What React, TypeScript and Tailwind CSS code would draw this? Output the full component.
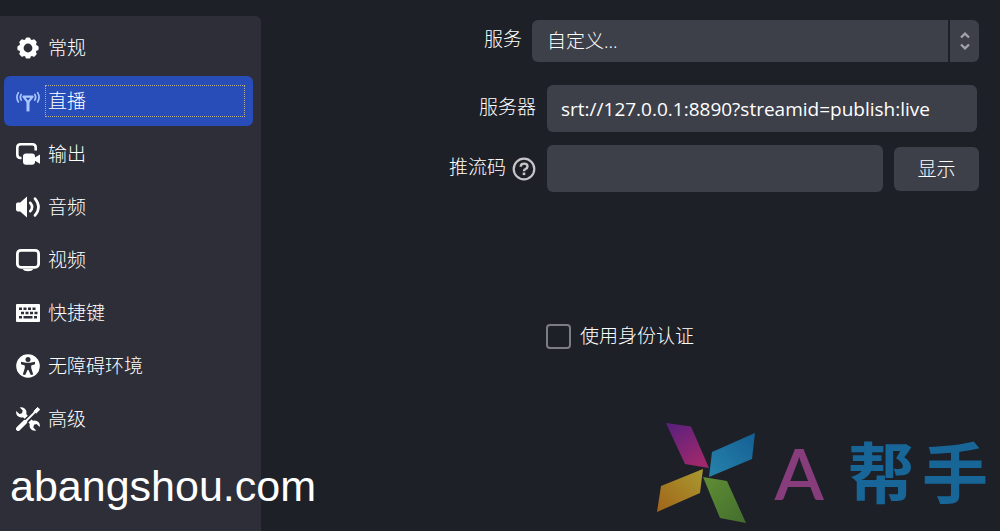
import { useState } from "react";
import type { ReactNode } from "react";
import clsx from "clsx";

interface Section {
  id: string;
  label: string;
  icon: ReactNode;
}

const teeth = [0, 45, 90, 135, 180, 225, 270, 315];

function GearIcon() {
  return (
    <svg viewBox="0 0 24 24" className="size-6" aria-hidden="true">
      <circle cx="12" cy="12" r="6.7" fill="none" stroke="currentColor" strokeWidth="4.6" />
      {teeth.map((angle) => (
        <rect
          key={angle}
          x="9.4"
          y="1.4"
          width="5.2"
          height="4.5"
          rx="1.6"
          fill="currentColor"
          transform={`rotate(${angle} 12 12)`}
        />
      ))}
    </svg>
  );
}

function AntennaIcon() {
  return (
    <svg viewBox="0 0 24 24" className="size-6 text-[#a9c6ff]" fill="none" stroke="currentColor" aria-hidden="true">
      <path d="M7.4 7.6h9.2L12 13.4z" strokeWidth="2.2" strokeLinejoin="round" />
      <path d="M12 12v10.4" strokeWidth="3" />
      <path d="M5.2 5.4q-1.8 2.8 0 5.8M18.8 5.4q1.8 2.8 0 5.8" strokeWidth="1.6" strokeLinecap="round" />
      <path d="M2.4 3.6q-3 4.6 0 9.4M21.6 3.6q3 4.6 0 9.4" strokeWidth="1.6" strokeLinecap="round" />
    </svg>
  );
}

function OutputIcon() {
  return (
    <svg viewBox="0 0 24 24" className="size-6" aria-hidden="true">
      <path
        d="M5.5 16H4.6Q1.3 16 1.3 12.5V5.5Q1.3 2.2 4.6 2.2H16.4Q19.7 2.2 19.7 5.5V8.5"
        fill="none"
        stroke="currentColor"
        strokeWidth="2.6"
      />
      <rect x="7" y="11.5" width="12" height="11.3" rx="3" fill="currentColor" />
      <path d="M18 16l6-3.5v9.2l-6-3.5z" fill="currentColor" />
    </svg>
  );
}

function SpeakerIcon() {
  return (
    <svg viewBox="0 0 24 24" className="size-6" aria-hidden="true">
      <path d="M0 9.5Q0 7.8 1.6 7.6H4.2L11 1.6V22.4L4.2 16.4H1.6Q0 16.2 0 14.5z" fill="currentColor" />
      <path
        d="M14.3 7.8q3.6 4.2 0 8.4M19 3.6q7 8.4 0 16.8"
        fill="none"
        stroke="currentColor"
        strokeWidth="2.6"
        strokeLinecap="round"
      />
    </svg>
  );
}

function MonitorIcon() {
  return (
    <svg viewBox="0 0 24 24" className="size-6" aria-hidden="true">
      <rect x="1.4" y="2.3" width="21.2" height="17" rx="3.4" fill="none" stroke="currentColor" strokeWidth="2.8" />
      <path d="M6.5 21h11q-1.5 2.2-5.5 2.2T6.500 21z" fill="currentColor" />
    </svg>
  );
}

function KeyboardIcon() {
  return (
    <svg viewBox="0 0 24 24" className="size-6" aria-hidden="true">
      <rect y="3" width="24" height="18" rx="1" fill="currentColor" />
      <path
        d="M3 7.8h3m1.500 0h3m1.500 0h3m1.500 0h3M5 12h3m1.500 0h3m1.500 0h3m1.500 0h3M3 16.300h3m1.500 0h9m1.500 0h3"
        stroke="#2d2e38"
        strokeWidth="2.6"
      />
    </svg>
  );
}

function AccessIcon() {
  return (
    <svg viewBox="0 0 24 24" className="size-6" aria-hidden="true">
      <circle cx="12" cy="12" r="11.8" fill="currentColor" />
      <circle cx="12" cy="5.4" r="2.5" fill="#2d2e38" />
      <path
        d="M5 7.800L10 8.800H14L19 7.800V10.200L15.200 11.400V14L17.200 20.400L14.800 21L12.500 16H11.500L9.200 21L6.800 20.400L8.800 14V11.400L5 10.200z"
        fill="#2d2e38"
      />
    </svg>
  );
}

function ToolsIcon() {
  return (
    <svg viewBox="0 0 24 24" className="size-6" aria-hidden="true">
      <path d="M2.2 21.8L9 15" stroke="currentColor" strokeWidth="4.400" strokeLinecap="round" />
      <path d="M8 16L20 4" stroke="currentColor" strokeWidth="1.800" />
      <path d="M18 4.200L21.600 0.400L23.800 2.600L20 6.200z" fill="currentColor" stroke="currentColor" strokeLinejoin="round" />
      <path
        d="M3.800 0.400Q8 -0.400 10 3.300Q10.800 5.200 10.200 7L11.800 8.700L8.700 11.800L7 10.200Q3.800 11.200 1.300 8.700Q-0.300 6.800 0.300 4L3.400 6.900L6 6.200L6.700 3.400z"
        fill="currentColor"
      />
      <path
        d="M20.200 23.600Q16 24.400 14 20.700Q13.200 18.800 13.800 17L12.400 15.500L15.500 12.400L17 13.800Q20.200 12.800 22.700 15.300Q24.300 17.200 23.700 20L20.600 17.100L18 17.800L17.300 20.600z"
        fill="currentColor"
      />
    </svg>
  );
}

function HelpIcon() {
  return (
    <svg viewBox="0 0 24 24" className="size-6 text-[#c6c6ca]" fill="none" stroke="currentColor" aria-hidden="true">
      <circle cx="12" cy="12" r="10.3" strokeWidth="2.2" />
      <path d="M8.700 9.800q0-3.200 3.400-3.200t3.400 2.900q0 1.600-2 2.500-1.500.7-1.500 2.200" strokeWidth="2.4" />
      <path d="M12 15.600v2.500" strokeWidth="2.6" />
    </svg>
  );
}

const sections: Section[] = [
  { id: "general", label: "常规", icon: <GearIcon /> },
  { id: "stream", label: "直播", icon: <AntennaIcon /> },
  { id: "output", label: "输出", icon: <OutputIcon /> },
  { id: "audio", label: "音频", icon: <SpeakerIcon /> },
  { id: "video", label: "视频", icon: <MonitorIcon /> },
  { id: "hotkeys", label: "快捷键", icon: <KeyboardIcon /> },
  { id: "accessibility", label: "无障碍环境", icon: <AccessIcon /> },
  { id: "advanced", label: "高级", icon: <ToolsIcon /> },
];

function Sidebar() {
  const [active, setActive] = useState("stream");

  return (
    <nav className="mt-4 flex w-[261px] shrink-0 flex-col gap-[3px] rounded-tr-md bg-[#2d2e38] pt-[7px] pr-2 pl-1">
      {sections.map((section) => (
        <button
          key={section.id}
          type="button"
          onClick={() => setActive(section.id)}
          className={clsx(
            "flex h-[50px] items-center gap-[5px] rounded-md pr-2 pl-3 text-left",
            section.id === active && "bg-[#284cb8]",
          )}
        >
          {section.icon}
          <span
            className={clsx(
              "flex h-8 flex-1 items-center border border-dotted pl-[2px]",
              section.id === active ? "border-[#b5b08c]" : "border-transparent",
            )}
          >
            {section.label}
          </span>
        </button>
      ))}
    </nav>
  );
}

function StreamForm() {
  const [server, setServer] = useState("srt://127.0.0.1:8890?streamid=publish:live");
  const [streamKey, setStreamKey] = useState("");
  const [showKey, setShowKey] = useState(false);

  return (
    <form className="flex-1 pt-5 pr-[21px]">
      <div className="flex items-center gap-[10px]">
        <label htmlFor="service" className="w-[261px] pb-1 text-right">
          服务
        </label>
        <div className="relative flex-1">
          <select
            id="service"
            className="block h-[42px] w-full appearance-none rounded-md bg-[#3d3f49] px-[15px]"
          >
            <option>自定义...</option>
          </select>
          <div className="pointer-events-none absolute inset-y-0 right-0 flex w-[31px] items-center justify-center border-l-2 border-[#1e2028]">
            <svg viewBox="0 0 10 18" className="h-[18px] w-[10px]" fill="none" stroke="#a3a4aa" strokeWidth="2.2">
              <path d="M1 5.500L5 1.600L9 5.500M1 12.500L5 16.400L9 12.500" />
            </svg>
          </div>
        </div>
      </div>

      <div className="mt-[23px] flex items-center gap-[11px] pr-[2px]">
        <label htmlFor="server" className="w-[275px] pb-1 text-right">
          服务器
        </label>
        <input
          id="server"
          type="text"
          value={server}
          onChange={(e) => setServer(e.target.value)}
          className="h-[47px] min-w-0 flex-1 rounded-md bg-[#3d3f49] px-[14px] font-normal"
        />
      </div>

      <div className="mt-[13px] flex items-center gap-[11px]">
        <label htmlFor="stream-key" className="flex w-[275px] items-center justify-end gap-[6px]">
          <span className="pb-1">推流码</span>
          <HelpIcon />
        </label>
        <input
          id="stream-key"
          type={showKey ? "text" : "password"}
          value={streamKey}
          onChange={(e) => setStreamKey(e.target.value)}
          className="h-[47px] min-w-0 flex-1 rounded-md bg-[#3d3f49] px-[14px] font-normal"
        />
        <button
          type="button"
          onClick={() => setShowKey(!showKey)}
          className="h-11 w-[85px] rounded-md bg-[#3d3f49]"
        >
          显示
        </button>
      </div>

      <label className="mt-[130px] ml-[285px] flex w-fit items-center gap-[9px]">
        <input
          type="checkbox"
          className="size-[25px] appearance-none rounded-[4px] border-2 border-[#7c7d84] checked:bg-[#284cb8]"
        />
        使用身份认证
      </label>
    </form>
  );
}

function Pinwheel() {
  return (
    <svg viewBox="0 0 100 102" className="h-[102px] w-[100px]" aria-hidden="true">
      <defs>
        <linearGradient id="petal-pink" x1="0" y1="0" x2="0.6" y2="1">
          <stop offset="0" stopColor="#56207d" />
          <stop offset="1" stopColor="#9e286d" />
        </linearGradient>
        <linearGradient id="petal-blue" x1="0" y1="1" x2="1" y2="0">
          <stop offset="0" stopColor="#2783aa" />
          <stop offset="1" stopColor="#145f94" />
        </linearGradient>
        <linearGradient id="petal-gold" x1="0" y1="1" x2="1" y2="0">
          <stop offset="0" stopColor="#a16419" />
          <stop offset="1" stopColor="#a99a30" />
        </linearGradient>
        <linearGradient id="petal-green" x1="0" y1="0" x2="1" y2="1">
          <stop offset="0" stopColor="#608e35" />
          <stop offset="1" stopColor="#436d2d" />
        </linearGradient>
      </defs>
      <path d="M11 2L36 5.500L54 47L30 43z" fill="url(#petal-pink)" />
      <path d="M100 12L97 38L54 56L57 31z" fill="url(#petal-blue)" />
      <path d="M2 91L6 65L48 48L45 72z" fill="url(#petal-gold)" />
      <path d="M48 56L72 60L91 102L65 97z" fill="url(#petal-green)" />
    </svg>
  );
}

function Watermark() {
  return (
    <div className="pointer-events-none absolute inset-x-0 bottom-0 flex items-end justify-between pr-3 pb-2 pl-[10px]">
      <span className="pb-[13px] font-['Liberation_Sans',sans-serif] text-[43px] leading-[48px] text-white">
        abangshou.com
      </span>
      <div className="flex items-center">
        <Pinwheel />
        <span className="ml-5 font-['Lato',sans-serif] text-[72px] leading-[80px] font-semibold text-[#873c7c]">
          A
        </span>
        <span className="ml-6 flex gap-2 text-[66px] leading-[80px] font-bold text-[#186698]">
          <span>帮</span>
          <span>手</span>
        </span>
      </div>
    </div>
  );
}

export default function App() {
  return (
    <div className="relative flex min-h-screen bg-[#1e2028] font-['Open_Sans','Noto_Sans_CJK_SC',sans-serif] text-[19px] leading-7 font-light text-white">
      <Sidebar />
      <StreamForm />
      <Watermark />
    </div>
  );
}
